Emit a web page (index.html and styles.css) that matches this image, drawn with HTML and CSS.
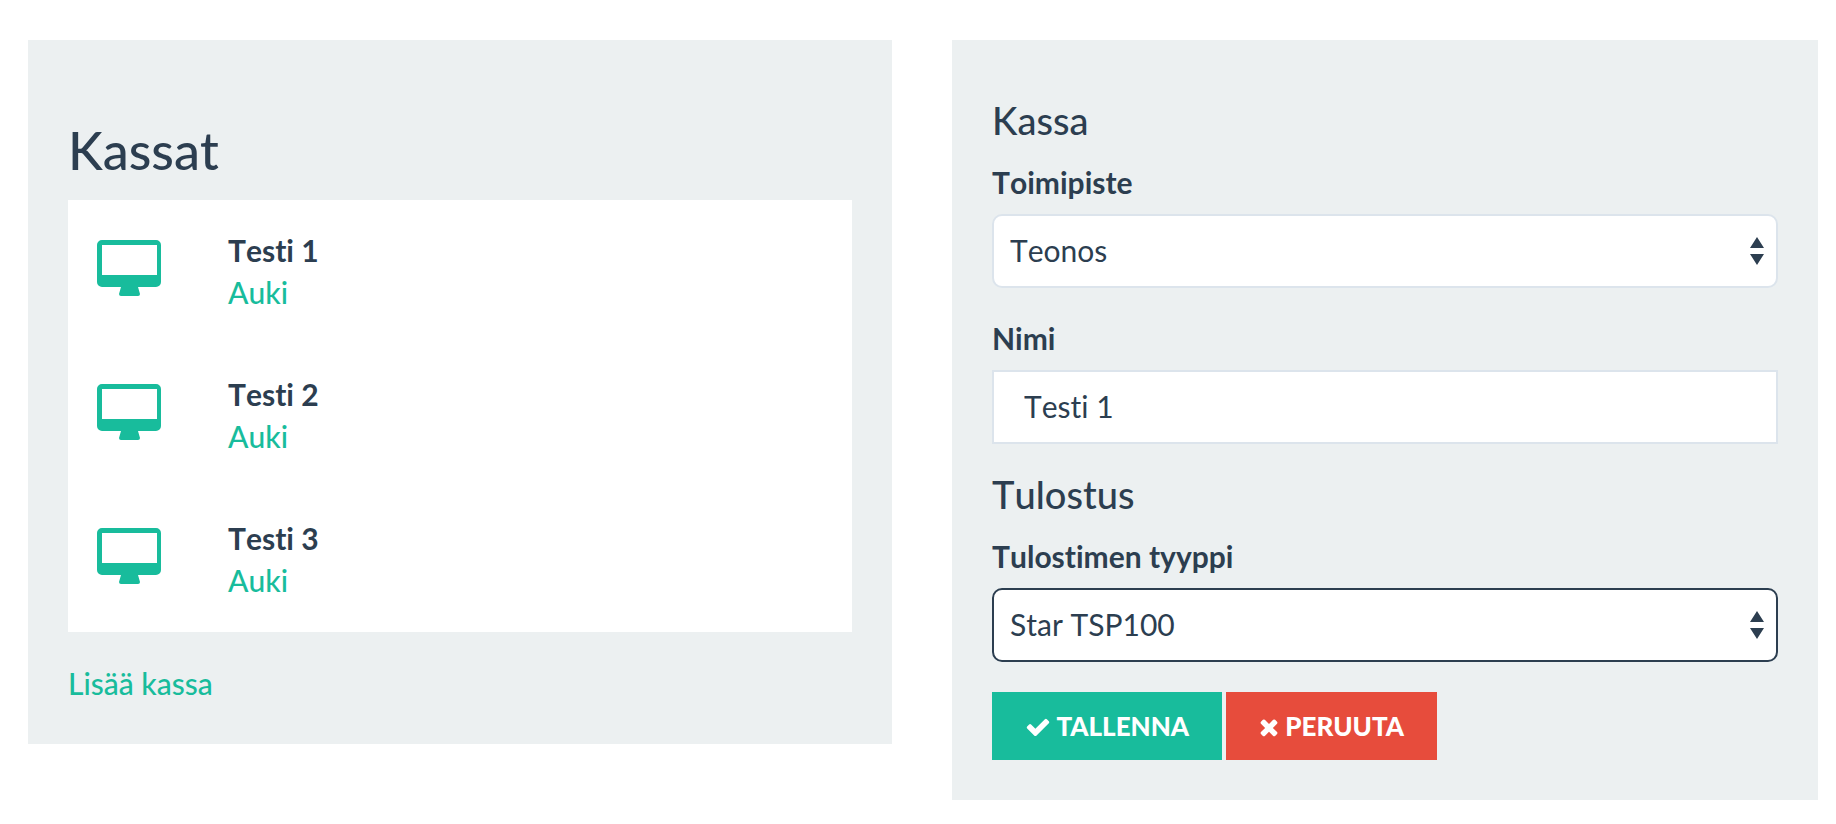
FILE: index.html
```html
<!DOCTYPE html>
<html lang="fi">
<head>
    <meta charset="UTF-8">
    <title>Kassat</title>
    <link rel="stylesheet" href="styles.css">
</head>
<body>

<!-- icon shapes, used below -->
<svg class="sprite" aria-hidden="true">
    <symbol id="icon-desktop" viewBox="0 0 66 57">
        <path fill-rule="evenodd" d="M6 0h54a5 5 0 0 1 5 5v37a5 5 0 0 1-5 5H42l2 7q0 2-2 2H25q-2 0-2-2l2-7H6a5 5 0 0 1-5-5V5a5 5 0 0 1 5-5zM6 5v30h55V5z"/>
    </symbol>
    <symbol id="icon-check" viewBox="0 0 1792 1792">
        <path d="M1671 566q0 40-28 68l-724 724-136 136q-28 28-68 28t-68-28l-136-136-362-362q-28-28-28-68t28-68l136-136q28-28 68-28t68 28l294 295 656-657q28-28 68-28t68 28l136 136q28 28 28 68z"/>
    </symbol>
    <symbol id="icon-times" viewBox="192 0 1408 1792">
        <path d="M1490 1322q0 40-28 68l-136 136q-28 28-68 28t-68-28l-294-294-294 294q-28 28-68 28t-68-28l-136-136q-28-28-28-68t28-68l294-294-294-294q-28-28-28-68t28-68l136-136q28-28 68-28t68 28l294 294 294-294q28-28 68-28t68 28l136 136q28 28 28 68t-28 68l-294 294 294 294q28 28 28 68z"/>
    </symbol>
    <symbol id="icon-sort" viewBox="0 0 14 28">
        <path d="M7 0l7 11H0zM0 17h14L7 28z"/>
    </symbol>
</svg>

<div class="row">
    <div class="well">
        <h2>Kassat</h2>
        <ul class="registers">
            <li>
                <svg class="register-icon"><use href="#icon-desktop"/></svg>
                <div>
                    <strong>Testi 1</strong>
                    <a href="#">Auki</a>
                </div>
            </li>
            <li>
                <svg class="register-icon"><use href="#icon-desktop"/></svg>
                <div>
                    <strong>Testi 2</strong>
                    <a href="#">Auki</a>
                </div>
            </li>
            <li>
                <svg class="register-icon"><use href="#icon-desktop"/></svg>
                <div>
                    <strong>Testi 3</strong>
                    <a href="#">Auki</a>
                </div>
            </li>
        </ul>
        <a href="#">Lisää kassa</a>
    </div>

    <form class="well">
        <h4>Kassa</h4>
        <div class="form-group">
            <label for="location">Toimipiste</label>
            <div class="select">
                <select id="location">
                    <option>Teonos</option>
                </select>
                <svg class="select-arrows"><use href="#icon-sort"/></svg>
            </div>
        </div>
        <div class="form-group">
            <label for="name">Nimi</label>
            <input type="text" id="name" value="Testi 1">
        </div>

        <h4>Tulostus</h4>
        <div class="form-group">
            <label for="printer">Tulostimen tyyppi</label>
            <div class="select">
                <select id="printer" class="active">
                    <option>Star TSP100</option>
                </select>
                <svg class="select-arrows"><use href="#icon-sort"/></svg>
            </div>
        </div>

        <div class="buttons">
            <button type="submit" class="btn save"><svg class="check"><use href="#icon-check"/></svg> TALLENNA</button>
            <button type="button" class="btn cancel"><svg class="times"><use href="#icon-times"/></svg> PERUUTA</button>
        </div>
    </form>
</div>

</body>
</html>
```

FILE: styles.css
```css
* {
    box-sizing: border-box;
}
body {
    margin: 0;
    font-family: Lato, "Open Sans", sans-serif;
    font-size: 30px;
    line-height: 42px;
    font-kerning: none;
    font-variant-ligatures: none;
    color: #2c3e50;
    background-color: #fff;
}
h2, h4 {
    margin: 0;
    font-weight: 500;
}
h2 {
    padding-top: 41px;
    margin-bottom: 21px;
    font-size: 52px;
    line-height: 58px;
}
h4 {
    margin-bottom: 20px;
    font-size: 38px;
    line-height: 42px;
}
a {
    font-weight: 500;
    color: #18bc9c;
    text-decoration: none;
}
a:hover {
    text-decoration: underline;
}
.sprite {
    display: none;
}

/* columns */
.row {
    display: grid;
    grid-template-columns: 432fr 433fr;
    align-items: start;
    gap: 60px;
    padding: 40px 18px 24px 28px;
}
.well {
    padding: 40px;
    background-color: #ecf0f1;
}
form.well {
    padding-top: 59px;
}

/* register list */
.registers {
    list-style-type: none;
    margin: 0 0 30px;
    padding: 0;
    background-color: #fff;
}
.registers li {
    display: flex;
    gap: 66px;
    padding: 29px 28px 31px;
}
.registers strong, .registers a {
    display: block;
}
.register-icon {
    width: 66px;
    height: 57px;
    margin-top: 11px;
    fill: #18bc9c;
}

/* form */
.form-group {
    margin-bottom: 29px;
}
label {
    display: block;
    margin-bottom: 11px;
    font-weight: bold;
}
select, input {
    display: block;
    width: 100%;
    height: 74px;
    border: 2px solid #dce4ec;
    background-color: #fff;
    font: inherit;
    color: inherit;
    outline: none;
}
input {
    padding: 0 30px 2px;
}
select {
    appearance: none;
    padding: 0 40px 2px 16px;
    border-radius: 10px;
}
select.active, select:focus, input:focus {
    border-color: #2c3e50;
}
.select {
    position: relative;
}
.select-arrows {
    position: absolute;
    top: 23px;
    right: 14px;
    width: 14px;
    height: 28px;
    fill: #2c3e50;
    pointer-events: none;
}

.buttons {
    display: flex;
    gap: 4px;
    padding-top: 1px;
}
.btn {
    height: 68px;
    padding: 0 33px;
    border: 0;
    font: inherit;
    font-size: 26px;
    font-weight: 900;
    font-kerning: normal;
    color: #fff;
    cursor: pointer;
}
.btn svg {
    height: 26px;
    vertical-align: -4px;
    fill: #fff;
}
.btn .check {
    width: 26px;
}
.btn .times {
    width: 20px;
}
.save {
    background-color: #18bc9c;
}
.cancel {
    background-color: #e74c3c;
}
```
